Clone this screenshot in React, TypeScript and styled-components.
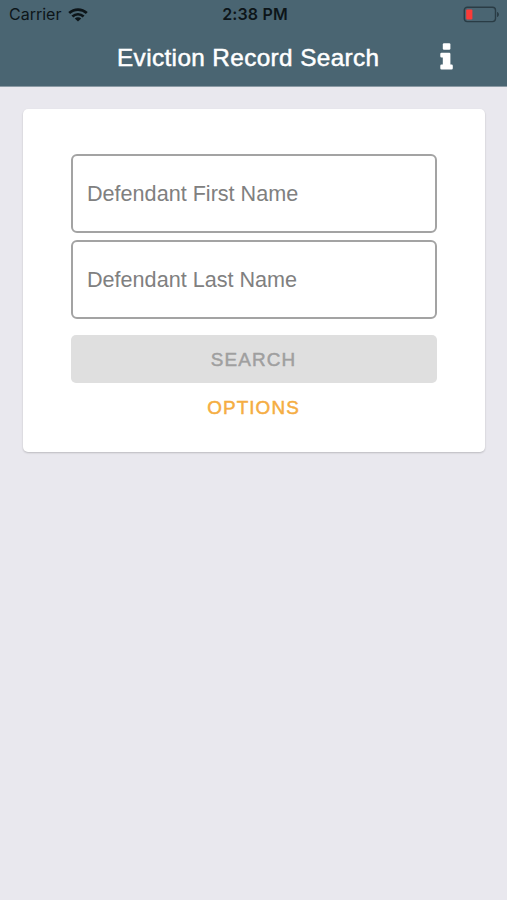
import React from "react";
import styled, { createGlobalStyle } from "styled-components";

const GlobalStyle = createGlobalStyle`
  * { box-sizing: border-box; }
  html, body { margin: 0; padding: 0; background: #e9e8ee; }
  body { font-family: "Liberation Sans", Arial, sans-serif; }
`;

const Screen = styled.div`
  width: 507px;
  height: 900px;
  overflow: hidden;
  background: #e9e8ee;
`;

const Header = styled.header`
  height: 87px;
  background: #4a6572;
  border-bottom: 1px solid #8b9aa4;
`;

const StatusBar = styled.div`
  height: 29px;
  padding: 0 7px 0 9px;
  display: grid;
  grid-template-columns: 1fr auto 1fr;
  align-items: center;
  font-family: Inter, sans-serif;
  font-size: 16px;
  line-height: 27px;
  color: #0d1519;
`;

const Carrier = styled.div`
  display: flex;
  align-items: center;
  gap: 7px;
  height: 27px;
`;

const Clock = styled.div`
  height: 27px;
  padding-left: 1px;
  font-weight: 600;
  letter-spacing: 0.15px;
`;

const BatteryIcon = styled.svg`
  justify-self: end;
`;

const NavBar = styled.div`
  height: 57px;
  padding: 0 54px 0 117px;
  display: flex;
  align-items: center;
  justify-content: space-between;
`;

const Title = styled.h1`
  margin: 0;
  font-size: 24.3px;
  font-weight: 400;
  line-height: 28px;
  letter-spacing: 0.39px;
  white-space: nowrap;
  color: #fff;
  -webkit-text-stroke: 0.5px #fff;
`;

const InfoButton = styled.button`
  margin: 0 0 2px;
  padding: 0;
  border: 0;
  background: none;
  display: flex;
`;

const Card = styled.form`
  margin: 22px 22px 0 23px;
  height: 343px;
  padding: 45px 48px 0;
  display: flex;
  flex-direction: column;
  background: #fff;
  border-radius: 5px;
  box-shadow: 0 1px 2px rgba(0, 0, 0, 0.2);
`;

const Field = styled.input`
  width: 100%;
  height: 79px;
  margin: 0 0 7px;
  padding: 1px 14px 0;
  border: 2px solid #a3a3a3;
  outline: 0;
  border-radius: 6px;
  background: #fff;
  font-family: inherit;
  font-size: 21.6px;
  &::placeholder {
    color: #808080;
    opacity: 1;
  }
`;

const Button = styled.button<{ $filled?: boolean }>`
  height: 48px;
  margin: ${(p) => (p.$filled ? "9px 0 0" : "0")};
  padding: 1px 1px 0 0;
  border: 0;
  border-radius: 5px;
  background: ${(p) => (p.$filled ? "#dfdfdf" : "transparent")};
  color: ${(p) => (p.$filled ? "#9f9f9f" : "#f5ad42")};
  -webkit-text-stroke: 0.5px currentColor;
  font-family: inherit;
  font-size: 18.9px;
  letter-spacing: 1.1px;
  line-height: 48px;
`;

const App = () => (
  <>
    <GlobalStyle />
    <Screen>
      <Header>
        <StatusBar>
          <Carrier>
            Carrier
            <svg width="20" height="14" viewBox="0 0 20 14" fill="none" stroke="#0d1519" strokeWidth="2.7">
              <path d="M1.2 5.1C6.2.4 13.8.4 18.8 5.1" />
              <path d="M4.4 8.5c3.2-3 8-3 11.2 0" />
              <path d="M10 13.6 6.8 10.5c1.8-1.6 4.6-1.6 6.4 0Z" fill="#0d1519" stroke="none" />
            </svg>
          </Carrier>
          <Clock>2:38 PM</Clock>
          <BatteryIcon width="37" height="17" viewBox="0 0 37 17">
            <rect x="1.3" y="1.2" width="31.2" height="14.4" rx="3" fill="none" stroke="#2a3c45" strokeWidth="1.4" />
            <rect x="3.2" y="3.4" width="6.2" height="10.2" rx="1" fill="#fb3b38" />
            <path d="M34 6v5c2.6-.6 2.6-4.4 0-5Z" fill="#2a3c45" />
          </BatteryIcon>
        </StatusBar>
        <NavBar>
          <Title>Eviction Record Search</Title>
          <InfoButton aria-label="Information">
            <svg width="13" height="28" viewBox="0 0 13 28" fill="#fff">
              <rect x="2.8" y="0.3" width="7.6" height="6.5" rx="1.2" />
              <path d="M1.5 9.7h7.7q1.2 0 1.2 1.2v10.6h1.2q1.2 0 1.2 1.2v2.5q0 1.2-1.2 1.2h-10.1q-1.2 0-1.2-1.2v-2.5q0-1.2 1.2-1.2h1.3v-7h-1.3q-1.2 0-1.2-1.2v-2.4q0-1.2 1.2-1.2Z" />
            </svg>
          </InfoButton>
        </NavBar>
      </Header>
      <Card>
        <Field placeholder="Defendant First Name" />
        <Field placeholder="Defendant Last Name" />
        <Button type="button" $filled disabled>SEARCH</Button>
        <Button type="button">OPTIONS</Button>
      </Card>
    </Screen>
  </>
);

export default App;
